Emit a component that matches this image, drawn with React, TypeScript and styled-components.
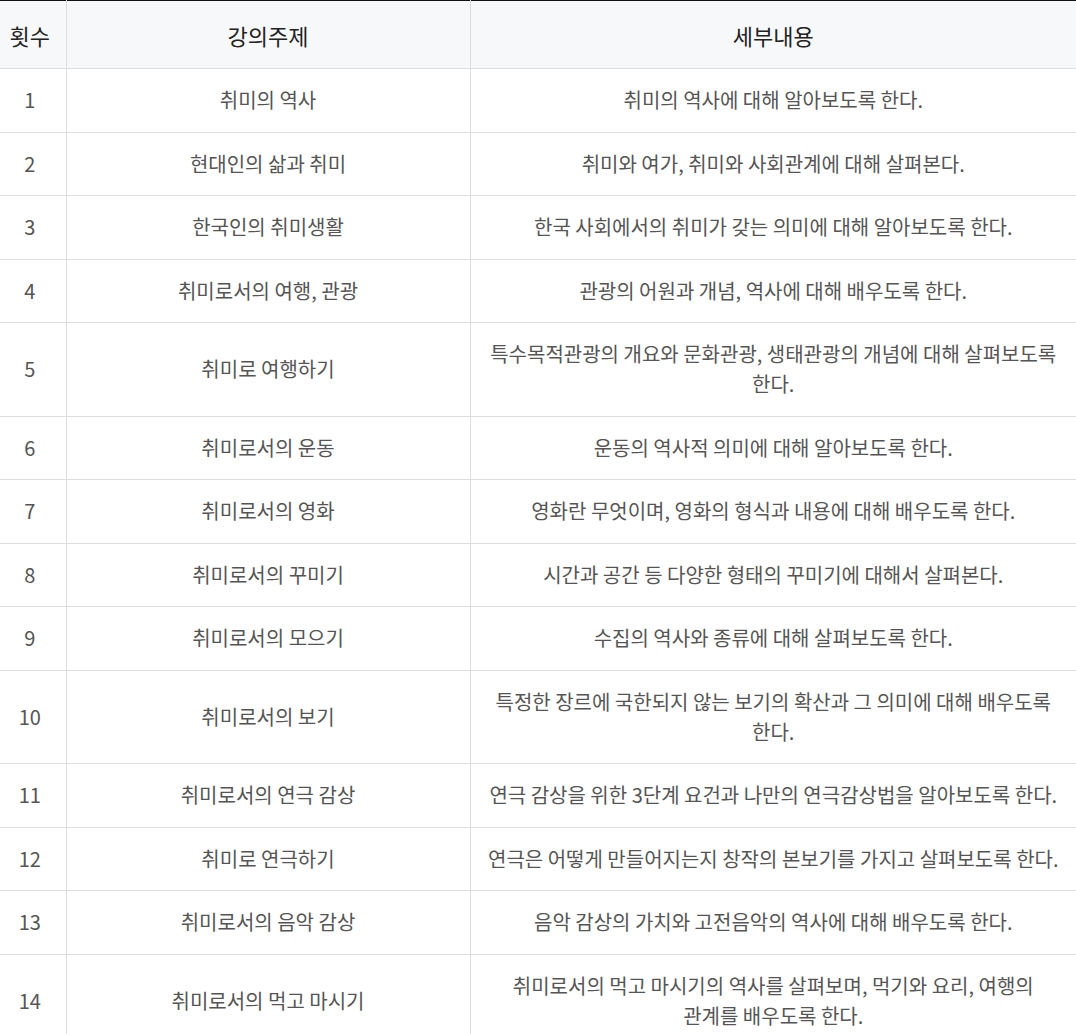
import { createGlobalStyle } from 'styled-components'
import styled from 'styled-components'

const GlobalStyle = createGlobalStyle`
  html, body {
    margin: 0;
    padding: 0;
    background: #fff;
  }
  body {
    font-family: "Noto Sans CJK KR", "Noto Sans", sans-serif;
  }
`

const Table = styled.table`
  width: 100%;
  border-collapse: collapse;
  table-layout: fixed;
  border-top: 1px solid #111;
`

// $width is the full column width, padding included
const HeadCell = styled.th<{ $width?: number }>`
  box-sizing: border-box;
  width: ${props => (props.$width ? `${props.$width}px` : 'auto')};
  height: 68px;
  padding: 0 15px;
  background: #f7f8fa;
  color: #222;
  font-size: 22px;
  font-weight: 400;
  line-height: 30px;
  text-align: center;
  border-bottom: 1px solid #ddd;
  border-left: 1px solid #ddd;
  &:first-child {
    border-left: none;
    padding: 0 6px 0 0;
  }
`

const Cell = styled.td`
  padding: 16.25px 15px;
  color: #555;
  font-size: 20px;
  line-height: 30px;
  text-align: center;
  vertical-align: middle;
  border-bottom: 1px solid #ddd;
  border-left: 1px solid #ddd;
  word-break: keep-all;
  &:first-child {
    border-left: none;
    padding-left: 0;
    padding-right: 6px;
  }
`

const lectures = [
  { topic: '취미의 역사', detail: '취미의 역사에 대해 알아보도록 한다.' },
  { topic: '현대인의 삶과 취미', detail: '취미와 여가, 취미와 사회관계에 대해 살펴본다.' },
  { topic: '한국인의 취미생활', detail: '한국 사회에서의 취미가 갖는 의미에 대해 알아보도록 한다.' },
  { topic: '취미로서의 여행, 관광', detail: '관광의 어원과 개념, 역사에 대해 배우도록 한다.' },
  { topic: '취미로 여행하기', detail: '특수목적관광의 개요와 문화관광, 생태관광의 개념에 대해 살펴보도록 한다.' },
  { topic: '취미로서의 운동', detail: '운동의 역사적 의미에 대해 알아보도록 한다.' },
  { topic: '취미로서의 영화', detail: '영화란 무엇이며, 영화의 형식과 내용에 대해 배우도록 한다.' },
  { topic: '취미로서의 꾸미기', detail: '시간과 공간 등 다양한 형태의 꾸미기에 대해서 살펴본다.' },
  { topic: '취미로서의 모으기', detail: '수집의 역사와 종류에 대해 살펴보도록 한다.' },
  { topic: '취미로서의 보기', detail: '특정한 장르에 국한되지 않는 보기의 확산과 그 의미에 대해 배우도록 한다.' },
  { topic: '취미로서의 연극 감상', detail: '연극 감상을 위한 3단계 요건과 나만의 연극감상법을 알아보도록 한다.' },
  { topic: '취미로 연극하기', detail: '연극은 어떻게 만들어지는지 창작의 본보기를 가지고 살펴보도록 한다.' },
  { topic: '취미로서의 음악 감상', detail: '음악 감상의 가치와 고전음악의 역사에 대해 배우도록 한다.' },
  { topic: '취미로서의 먹고 마시기', detail: '취미로서의 먹고 마시기의 역사를 살펴보며, 먹기와 요리, 여행의 관계를 배우도록 한다.' },
]

export default function App() {
  return (
    <>
      <GlobalStyle />
      <Table>
        <thead>
          <tr>
            <HeadCell $width={66}>횟수</HeadCell>
            <HeadCell $width={404}>강의주제</HeadCell>
            <HeadCell>세부내용</HeadCell>
          </tr>
        </thead>
        <tbody>
          {lectures.map((item, index) => (
            <tr key={item.topic}>
              <Cell>{index + 1}</Cell>
              <Cell>{item.topic}</Cell>
              <Cell>{item.detail}</Cell>
            </tr>
          ))}
        </tbody>
      </Table>
    </>
  )
}
